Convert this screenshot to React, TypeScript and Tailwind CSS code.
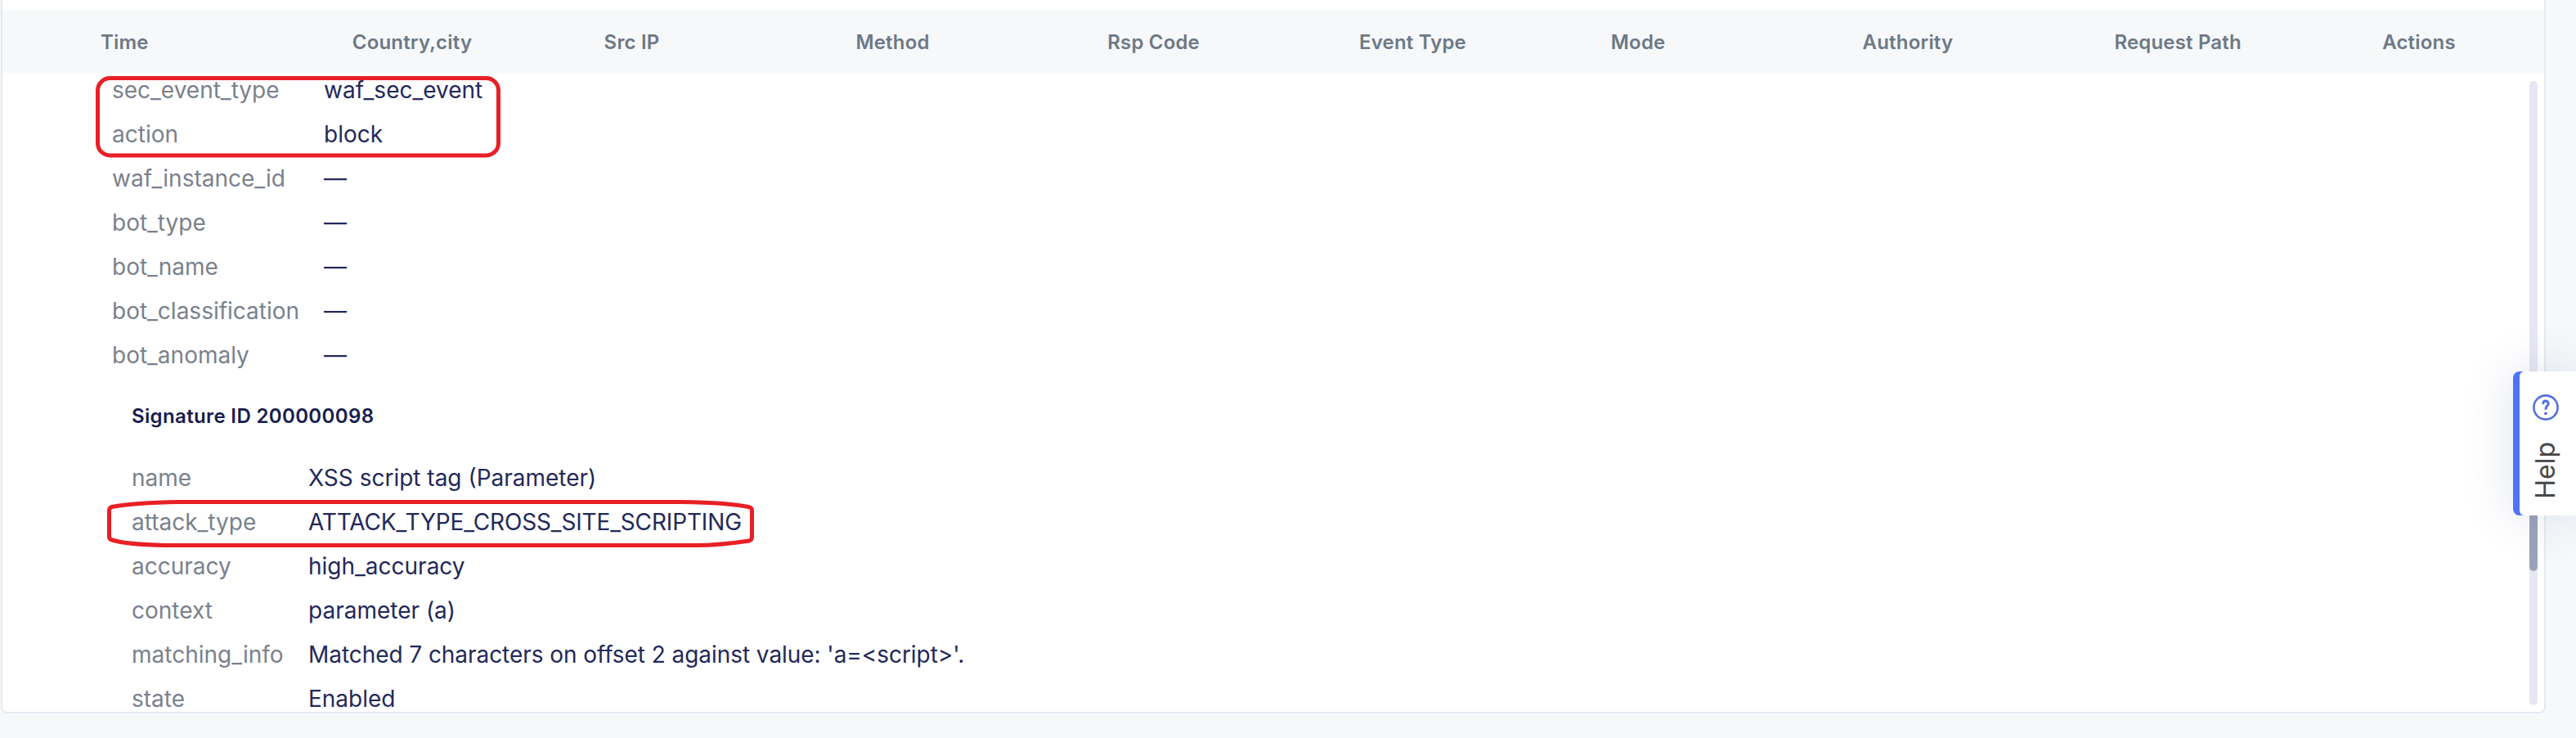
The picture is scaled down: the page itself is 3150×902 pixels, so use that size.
import React from "react";

const columns = [
  "Time",
  "Country,city",
  "Src IP",
  "Method",
  "Rsp Code",
  "Event Type",
  "Mode",
  "Authority",
  "Request Path",
];

const eventFields: [string, string][] = [
  ["sec_event_type", "waf_sec_event"],
  ["action", "block"],
  ["waf_instance_id", "—"],
  ["bot_type", "—"],
  ["bot_name", "—"],
  ["bot_classification", "—"],
  ["bot_anomaly", "—"],
];

const signatureFields: [string, string][] = [
  ["name", "XSS script tag (Parameter)"],
  ["attack_type", "ATTACK_TYPE_CROSS_SITE_SCRIPTING"],
  ["accuracy", "high_accuracy"],
  ["context", "parameter (a)"],
  ["matching_info", "Matched 7 characters on offset 2 against value: 'a=<script>'."],
  ["state", "Enabled"],
];

function Row({ label, value, labelClass }: { label: string; value: string; labelClass: string }) {
  const upper = value === value.toUpperCase() && value.length > 1;
  const long = value.length > 40;
  return (
    <div className="flex h-[54px] items-center whitespace-nowrap text-[28px] leading-[54px]">
      <div className={`shrink-0 text-[#7a818d] ${labelClass}`}>{label}</div>
      <div className={`text-[#222959] ${upper ? "tracking-[-0.15px]" : long ? "tracking-[-0.06px]" : ""}`}>{value}</div>
    </div>
  );
}

function Highlights() {
  return (
    <svg
      className="pointer-events-none absolute left-0 top-0"
      width="1000"
      height="700"
      fill="none"
      stroke="#e81f25"
      strokeWidth="5"
    >
      <rect x="119.5" y="95.5" width="490" height="94.5" rx="15" />
      <path d="M220 613.5H832C868 614 900 616 917 620Q919.5 621 919.5 624V656Q919.5 660 916 661C896 664 872 666.500 850 666.500H202C180 666 150 664 137 660Q133.500 659 133.500 656V624Q133.500 620.500 137 619.500C155 616 185 614 220 613.500Z" />
    </svg>
  );
}

function HelpTab() {
  return (
    <button className="absolute right-0 top-[454px] flex h-[176px] w-[77px] flex-col items-center rounded-l-lg bg-[#4f73f6] pl-2 shadow-[0_0_60px_rgba(60,80,140,0.16)]">
      <span className="flex h-full w-full flex-col items-center rounded-l-md bg-white pr-[5px] pt-[28px]">
        <svg width="32" height="32" viewBox="0 0 32 32" fill="none" stroke="#5570dc" strokeWidth="2.6" strokeLinecap="round">
          <circle cx="16" cy="16" r="14.600" />
          <path d="M12.800 10.800C13.300 8.500 15 8 16.200 8.100C18 8.200 19.300 9.600 19.200 11.400C19.100 14 16.300 14 16 17.600" strokeWidth="3" />
          <circle cx="16" cy="23.300" r="1.900" fill="#5570dc" stroke="none" />
        </svg>
        <span className="mt-[26px] rotate-180 text-[32px] leading-[40px] text-[#484848] [writing-mode:vertical-rl]">
          Help
        </span>
      </span>
    </button>
  );
}

export default function App() {
  return (
    <div className="relative h-[902px] w-[3150px] overflow-hidden bg-[#f6f8fa] pl-px font-['Inter',sans-serif]">
      <div className="flex h-[872px] w-[3112px] flex-col rounded-b-lg border-2 border-t-0 border-[#e6e8f1] bg-white pt-[13px]">
        <div className="flex h-[76px] shrink-0 items-center bg-[#f6f8fa] pl-[120px] pt-px text-2xl font-semibold tracking-[0.18px] text-[#6e7886]">
          {columns.map((c) => (
            <div key={c} className="w-[307.8px] shrink-0 whitespace-nowrap">
              {c}
            </div>
          ))}
          <div className="pl-5">Actions</div>
        </div>
        <div className="flex min-h-0 flex-1 overflow-hidden">
          <div className="-mt-[6px] flex-1">
            <div className="pl-[134px]">
              {eventFields.map(([l, v]) => (
                <Row key={l} label={l} value={v} labelClass="w-[259px]" />
              ))}
            </div>
            <div className="pl-[158px]">
              <h3 className="h-[96px] text-2xl leading-[96px] font-semibold tracking-[0.36px] text-[#171d4f]">
                Signature ID 200000098
              </h3>
              {signatureFields.map(([l, v]) => (
                <Row key={l} label={l} value={v} labelClass="w-[216px]" />
              ))}
            </div>
          </div>
          <div className="mb-2 mr-2 mt-[10px] flex w-[10px] flex-col rounded-full bg-[#e6e7f2]">
            <div className="mt-[479px] h-[120px] rounded-full bg-[#9ba3b8]" />
          </div>
        </div>
      </div>
      <Highlights />
      <HelpTab />
    </div>
  );
}
